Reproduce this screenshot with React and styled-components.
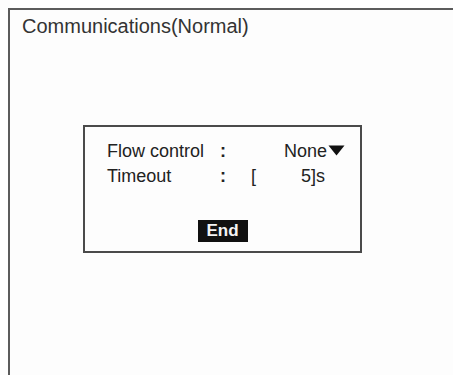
import React from "react";
import styled, { createGlobalStyle } from "styled-components";

const Global = createGlobalStyle`
  html, body { margin: 0; padding: 0; background: #fdfdfd; }
  body { width: 453px; height: 375px; overflow: hidden; font-family: "Liberation Sans", Arial, sans-serif; color: #222; }
`;

const Screen = styled.div`
  width: 453px;
  height: 375px;
  box-sizing: border-box;
  padding: 8px 0 0 8px;
  background: #fdfdfd;
`;

const Frame = styled.div`
  height: 100%;
  box-sizing: border-box;
  border-top: 2px solid #5a5a5a;
  border-left: 2px solid #5a5a5a;
  display: flex;
  flex-direction: column;
`;

const Title = styled.div`
  font-size: 20px;
  line-height: 23px;
  padding: 5px 0 0 12px;
  color: #333;
`;

const DialogArea = styled.div`
  padding: 87px 0 0 73px;
`;

const Dialog = styled.div`
  width: 279px;
  height: 128px;
  box-sizing: border-box;
  border: 2px solid #4a4a4a;
  padding: 12px 0 0 22px;
  display: flex;
  flex-direction: column;
`;

const Row = styled.div`
  display: grid;
  grid-template-columns: 112px 8px 1fr;
  font-size: 18px;
  line-height: 25px;
  height: 25px;
`;

const Colon = styled.span`
  font-weight: bold;
  text-align: center;
`;

const Value = styled.span`
  display: flex;
  align-items: center;
  justify-content: flex-end;
  padding-right: ${(p) => p.$pad}px;
`;

const Bracket = styled.span`
  margin-right: auto;
  margin-left: 24px;
`;

const Arrow = styled.svg`
  width: 17px;
  height: 11px;
  margin-left: 1px;
  margin-top: -2px;
`;

const Footer = styled.div`
  margin-top: 31px;
  display: flex;
  justify-content: center;
  padding-right: 22px;
`;

const EndButton = styled.div`
  background: #111;
  color: #f4f4f4;
  font-size: 17px;
  font-weight: bold;
  line-height: 22px;
  height: 22px;
  width: 50px;
  text-align: center;
`;

export default function App() {
  return (
    <Screen>
      <Global />
      <Frame>
        <Title>Communications(Normal)</Title>
        <DialogArea>
          <Dialog>
            <Row>
              <span>Flow control</span>
              <Colon>:</Colon>
              <Value $pad={15}>
                None
                <Arrow viewBox="0 0 17 11">
                  <path d="M0.5 0.5 H16.5 L8.5 10.5 Z" fill="#111" />
                </Arrow>
              </Value>
            </Row>
            <Row>
              <span>Timeout</span>
              <Colon>:</Colon>
              <Value $pad={35}>
                <Bracket>[</Bracket>
                <span>5]s</span>
              </Value>
            </Row>
            <Footer>
              <EndButton>End</EndButton>
            </Footer>
          </Dialog>
        </DialogArea>
      </Frame>
    </Screen>
  );
}
